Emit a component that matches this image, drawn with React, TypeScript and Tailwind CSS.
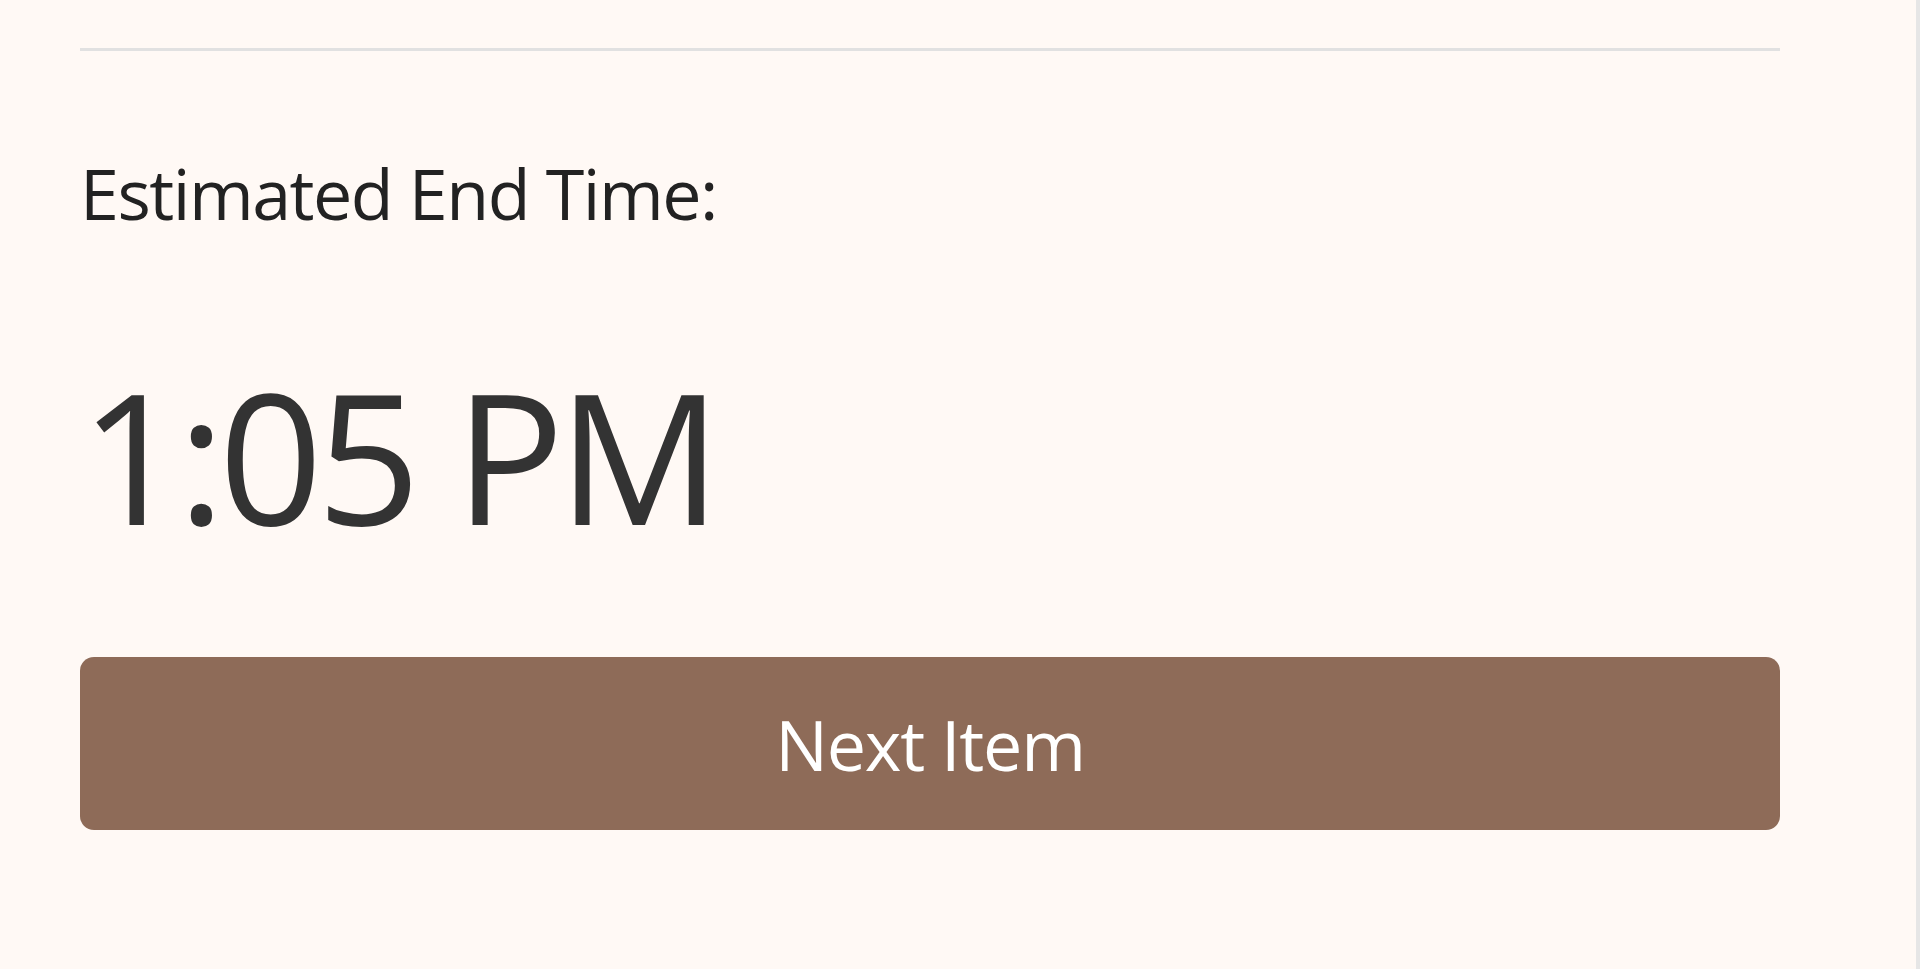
export default function App() {
  return (
    <div className="flex min-h-[969px] w-full bg-[#fff9f5] font-['Open_Sans',sans-serif]">
      <main className="flex-1 pl-[80px] pr-[136px] pt-[48px]">
        <hr className="border-0 h-[3px] bg-[#e1e1e1]" />

        <p className="mt-[107px] text-[70px] leading-none tracking-[-1.5px] text-[#222]">Estimated End Time:</p>

        <div className="mt-[135px] text-[182px] leading-none tracking-[-6.5px] text-[#333]">1:05 PM</div>

        <button
          type="button"
          className="mt-[112px] flex h-[173px] w-full items-center justify-center rounded-[14px] bg-[#8e6b58] text-[70px] leading-none tracking-[-1.2px] text-white"
        >
          Next Item
        </button>
      </main>
      <div className="w-[4px] bg-[#e6e6e6]" />
    </div>
  );
}
